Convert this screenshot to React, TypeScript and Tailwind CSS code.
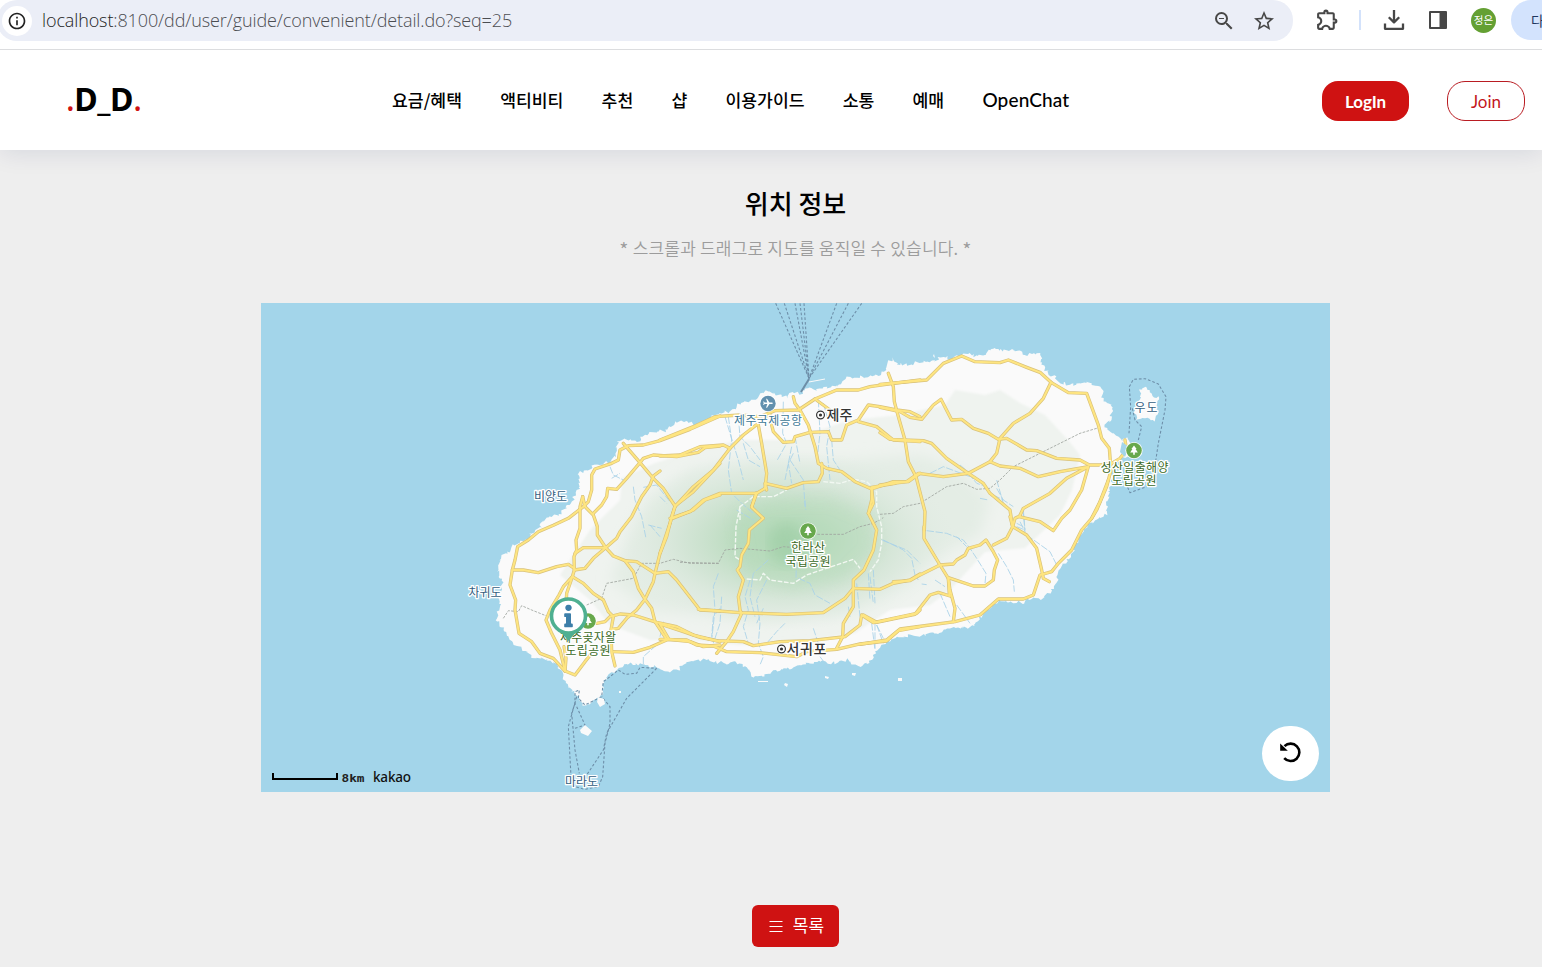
import React from "react";
import { FaInfo } from "react-icons/fa";
import { MdFlight, MdInfoOutline, MdOutlineExtension, MdStarBorder, MdZoomOut } from "react-icons/md";

type Sheet = { x: number; y: number; lines: string[] };

const coast =
  "497,597 502,588 502,580 499,572 498,563 503,556 511,552 513,546 525,540 532,533 540,527 547,517 560,515 567,508 573,500 576,492 580,488 579,473 587,471 593,465 610,462 615,456 618,442 622,440 630,439 637,442 647,435 657,431 665,431 673,425 680,421 687,421 693,425 704,422 712,416 720,414 735,409 740,403 753,400 760,394 768,391 775,394 787,397 793,392 800,394 807,388 815,391 828,387 840,385 847,378 860,377 875,376 883,373 888,363 893,358 898,363 905,365 920,362 930,363 943,356 951,359 963,353 974,356 987,353 990,348 1003,350 1013,349 1027,355 1040,353 1043,367 1053,377 1062,383 1073,385 1080,382 1087,382 1102,388 1103,400 1112,404 1111,420 1103,425 1109,431 1122,440 1128,437 1132,445 1127,455 1117,463 1112,473 1112,480 1108,497 1106,514 1093,522 1083,531 1077,540 1075,550 1066,562 1057,570 1058,584 1042,600 1030,599 1023,603 1000,600 983,613 973,627 957,627 933,634 915,636 903,636 893,638 884,645 875,653 867,663 858,666 847,660 833,663 820,661 803,664 790,668 773,672 766,676 753,677 747,669 740,663 723,663 707,660 693,660 677,670 668,671 657,667 640,665 630,663 617,669 608,675 603,683 602,695 594,702 584,705 577,697 568,685 562,674 556,664 546,659 533,657 520,648 510,640 503,628 495,618 500,607";

const udo = "1140,390 1146,386 1150,393 1155,397 1160,397 1156,403 1158,413 1155,422 1147,418 1137,419 1134,412 1136,404 1141,400";

/* Adds small irregular offsets between the surveyed points of a shoreline. */
function ragged(points: string, size: number): string {
  const pts = points.split(" ").map((p) => p.split(",").map(Number));
  let seed = 17;
  const rnd = () => {
    seed = (seed * 16807) % 2147483647;
    return seed / 2147483647 - 0.5;
  };
  const out: string[] = [];
  pts.forEach((a, i) => {
    const b = pts[(i + 1) % pts.length];
    const n = Math.max(1, Math.round(Math.hypot(b[0] - a[0], b[1] - a[1]) / 2));
    for (let k = 0; k < n; k++) {
      const t = k / n;
      out.push((a[0] + (b[0] - a[0]) * t + rnd() * size).toFixed(1) + "," + (a[1] + (b[1] - a[1]) * t + rnd() * size).toFixed(1));
    }
  });
  return out.join(" ");
}

const coastPoints = ragged(coast, 3.6);
const udoPoints = ragged(udo, 2);

const roads: Sheet[] = [
  {
    x: 460, y: 400,
    lines: [
      "780,48 690,88 600,122 550,135 505,137 480,150 475,180 455,190 405,207 395,225 395,270 385,305 370,320 325,355 280,376 235,395 205,420 173,440 165,480 157,510 150,555 167,600 165,630 177,700 215,725 240,760 280,775 315,813 345,825 375,785 395,760",
      "490,130 540,188 580,235 610,265 645,318 635,350 620,410 600,460 585,520 580,545 555,598 530,630 500,655 475,685 455,688",
      "780,138 735,143 715,157 650,170 580,165 550,175 540,188 500,235 470,268 443,265 440,290 425,315 400,340",
      "600,213 580,228 570,255 545,290 515,350 480,395 470,415 437,443",
      "368,290 375,320 400,345 412,380 412,405 437,443 460,468 495,482 520,515 535,565 555,598 575,625 585,665 620,718",
      "368,290 360,320 360,385 348,420 350,450 342,470 343,510 337,530 310,560 297,585 270,630 258,660 275,700 300,750 315,813",
      "437,443 370,443 345,460", "437,443 400,475 375,505 343,510",
      "157,510 190,510 235,518 290,500 325,493 343,505",
      "337,530 370,550 400,580 430,600 445,635 460,650 453,690 455,755 465,798",
      "337,530 320,580 318,620",
      "495,482 530,485 585,520 625,515 650,540 720,630 780,633",
      "780,190 700,275 645,318", "780,285 735,300 700,330 638,355",
    ],
  },
  {
    x: 460, y: 590,
    lines: [
      "410,100 435,95 450,80 480,72 520,75 590,97 650,110 700,135 780,155",
      "460,185 520,187 570,172 625,148 690,155 730,170 780,165", "312,170 318,205 315,243",
    ],
  },
  {
    x: 660, y: 300,
    lines: [
      "0,420 100,380 165,350 240,345 300,350 345,332 415,330 465,297 530,270 595,270 630,260 700,250 780,240",
      "400,290 405,310 420,330 445,375 465,440 475,490 500,505 545,515 585,545 635,567 700,545 745,545 780,520",
      "0,468 60,465 120,440 190,435 210,445 160,510 100,560 45,620",
      "210,445 250,405 295,370 330,345",
      "295,375 305,430 320,520 315,565 290,580 180,580 130,600 90,635 30,655",
      "335,375 340,395 370,427 400,425 405,410 450,397 505,395 515,420 545,420 560,375 595,360 625,315 660,320 710,330 750,335 780,350",
      "485,490 487,520 475,545 430,548 380,565 315,550 320,570",
      "595,365 650,380 700,420 780,425", "465,297 510,330", "290,580 275,620",
    ],
  },
  {
    x: 660, y: 500,
    lines: [
      "288,-20 275,22 310,55 268,90 265,130 245,165 240,200 232,210 250,240 235,290 240,330 245,340 220,395 200,425 170,460",
      "45,20 30,70 0,160",
      "115,328 240,338 380,343 490,338 555,295 580,265 660,268 700,250 750,240 780,222",
      "635,-33 640,10 625,40 650,90 640,150 612,210 580,240 580,320 550,370 548,410 530,445",
      "0,372 70,395 120,412 170,422 250,425 280,437 360,425 450,422 555,410 600,375 605,345 640,368 700,355 770,340 780,330",
      "0,418 80,420 110,435 160,438 200,455 300,458 410,470 440,455 530,448 600,432 680,423 715,392 780,380",
      "0,372 25,415",
    ],
  },
  {
    x: 880, y: 330,
    lines: [
      "0,163 140,150 190,100 245,78 285,95 360,98 385,90 440,112 480,127 513,157 565,188 620,190 655,285 665,325 688,355 693,420 680,470 650,540 635,565",
      "25,130 40,170 43,215 55,260 75,330 85,395 108,440 135,545 133,600",
      "513,157 490,205 450,250 400,280 360,325 350,370 330,395 265,430 190,440 115,430 80,455 0,465",
      "0,232 60,245 90,262 125,268 160,225 183,208 215,270 245,268 280,295 325,310 355,328 380,325 440,360 470,362 530,385 600,390 628,405 660,405 695,400 720,385 740,360 735,330",
      "0,308 30,328 130,332 155,340 200,385 265,430 310,460 330,490 390,540 398,590",
      "330,395 360,408 420,415 475,440 540,425 625,410 560,445 510,490 430,535 418,560 480,575 520,602 545,565 570,540 605,480 625,410",
    ],
  },
  {
    x: 860, y: 480,
    lines: [
      "745,0 720,65 695,115 665,150 635,210 595,250 575,275 540,285 520,345 490,357 415,357 360,405 285,425 120,447 80,480 0,493",
      "192,140 192,175 240,255 265,295 270,330 285,385 280,425", "265,295 268,345",
      "100,305 150,302 180,285 240,255 280,252 290,240 315,225 325,205 360,195 378,180 400,215 413,240 403,270 400,300 375,318 340,318 265,293",
      "450,110 458,140 500,165 530,205 545,270 550,295 568,305", "458,140 440,175 400,195",
      "458,140 465,115 480,108", "270,348 235,337 210,345 165,403 50,427 10,405",
      "105,10 35,22 35,60 25,100",
    ],
  },
];

const rivers: Sheet[] = [
  { x: 460, y: 400, lines: ["450,200 460,225 490,240", "520,260 525,300 545,350 558,415", "550,262 590,255 630,305", "565,375 605,385", "570,375 600,410", "455,235 480,220"] },
  { x: 460, y: 590, lines: ["780,55 760,80 755,140", "590,165 550,200 550,225", "610,95 600,140"] },
  {
    x: 660, y: 300,
    lines: [
      "195,350 210,400 235,480 250,540", "205,350 215,420 205,510 215,580 245,610 280,640", "235,350 240,410 270,440 300,480", "370,305 368,400 380,430 352,480", "395,440 375,540",
      "400,460 385,490 395,550", "390,480 430,540 435,620", "475,300 480,400 472,470", "490,310 510,380 500,440 510,540", "515,420 520,480 540,510", "405,410 420,490", "0,590 20,610", "250,430 265,480 300,500",
    ],
  },
  {
    x: 660, y: 500,
    lines: [
      "175,220 160,260 165,330 155,420", "185,290 180,370 160,430", "270,240 255,290 265,330 250,380 265,430", "325,180 280,220 270,290 285,350", "320,240 290,300 300,370 295,430 310,470 300,495",
      "410,130 408,240", "415,235 450,250 465,285 510,310", "375,370 350,395 320,430", "230,30 280,60", "435,0 437,30", "460,385 475,430", "640,210 645,310", "625,220 630,300", "665,120 740,150 780,190",
      "645,370 645,450", "650,375 670,430", "480,470 510,510", "310,325 290,370", "565,320 570,350", "590,250 600,350",
    ],
  },
  { x: 880, y: 330, lines: ["150,430 190,410 270,440", "265,430 290,460 320,470", "350,450 370,520", "340,495 370,510 400,530", "430,540 435,600", "410,580 430,590", "240,405 270,430"] },
  {
    x: 860, y: 480,
    lines: [
      "200,152 260,160 310,180 330,205 350,235 378,280 375,310", "290,170 320,200", "70,180 130,210 155,235 165,285 175,300", "415,220 440,260 460,300 463,335", "500,165 570,215 590,255",
      "410,25 430,60", "480,125 495,155 490,100", "470,140 495,150", "360,55 385,60", "225,300 255,320", "240,340 270,410", "290,375 330,430", "30,290 40,370", "35,430 45,510", "50,435 70,475", "185,312 200,314",
    ],
  },
];

const boundaries: Sheet[] = [
  { x: 460, y: 400, lines: ["130,655 145,632 175,635 185,617 215,630 265,650", "380,615 425,595 440,550 520,535 545,490 600,490 640,478 690,490 780,490"] },
  { x: 660, y: 500, lines: ["60,187 175,190 195,150 240,145 330,153 370,140 430,145", "460,103 550,103 600,80 640,70 670,53"] },
  { x: 880, y: 330, lines: ["0,553 40,550 70,530 120,520 200,470 250,460 290,478 330,475 360,450 400,410 500,360 600,310 660,292"] },
];

const parkLines: Sheet[] = [
  { x: 660, y: 500, lines: ["240,60 240,20 280,-10 340,-10 380,-30", "490,-55 540,-50 580,-62 620,-55 650,-25 650,20 665,80 665,130 655,180 630,215", "240,20 228,80 225,170 240,180", "260,237 300,240 310,220 330,240 400,250 440,225 580,178 600,205"] },
];

const ferries: Sheet[] = [
  {
    x: 460, y: 590,
    lines: [
      "350,320 325,410 333,560 345,590 375,598 415,590 428,560 435,460 450,400 450,350 425,320", "345,340 335,370 345,480 358,550", "350,350 375,405 345,415", "590,235 500,325 440,430 430,480 380,555",
      "345,345 345,305 358,300 355,325 375,345 425,320 430,275 450,260 475,240 495,253 530,250 540,232 590,235",
    ],
  },
  { x: 660, y: 300, lines: ["347,10 447,235", "373,10 447,235", "405,10 447,235", "420,10 447,235", "432,10 447,235", "530,10 447,235", "565,10 447,235", "605,10 447,235"] },
  { x: 880, y: 330, lines: ["747,310 752,230 748,170 760,148 795,146 835,162 858,200 855,240 835,340 820,440 800,470 750,488 742,470", "757,235 765,270 785,290 775,330"] },
];

const Lines = ({ data, stroke, width, dash }: { data: Sheet[]; stroke: string; width: number; dash?: string }) => (
  <g fill="none" stroke={stroke} strokeWidth={width} strokeDasharray={dash} strokeLinecap={dash ? "butt" : "round"} strokeLinejoin="round">
    {data.map((s, i) => (
      <g key={i} transform={`translate(${s.x} ${s.y}) scale(.33333)`}>
        {s.lines.map((l, k) => (
          <polyline key={k} points={l} />
        ))}
      </g>
    ))}
  </g>
);

const Label = ({ x, y, w, color = "#35607f", size = 12, weight = 400, children }: { x: number; y: number; w: number; color?: string; size?: number; weight?: number; children: string }) => (
  <text x={x} y={y} textAnchor="middle" textLength={w} fontSize={size} fontWeight={weight} fill={color} stroke="#fff" strokeWidth="2.6" strokeLinejoin="round" paintOrder="stroke">
    {children}
  </text>
);

const Tree = ({ x, y }: { x: number; y: number }) => (
  <g transform={`translate(${x} ${y})`}>
    <circle r="8.6" fill="#fff" />
    <circle r="7.8" fill="#67a84c" />
    <path d="M0-5 2.6-1.4H1.6L3.8 2H.8V4.2H-.8V2H-3.8L-1.6-1.4H-2.6Z" fill="#fff" />
  </g>
);

const Town = ({ x, y }: { x: number; y: number }) => (
  <g transform={`translate(${x} ${y})`}>
    <circle r="5.2" fill="#fff" />
    <circle r="3.9" fill="#fff" stroke="#333" strokeWidth="1.2" />
    <circle r="1.6" fill="#333" />
  </g>
);

function IslandMap() {
  return (
    <svg className="block h-full w-full font-['Noto_Sans_CJK_KR',sans-serif]" viewBox="261 303 1069 489">
      <defs>
        <clipPath id="land"><polygon points={coastPoints} /></clipPath>
        <radialGradient id="peak">
          <stop offset="0" stopColor="#aad5b0" />
          <stop offset=".3" stopColor="#bcdcc0" />
          <stop offset=".6" stopColor="#cfe3d2" stopOpacity=".8" />
          <stop offset="1" stopColor="#e0ebe2" stopOpacity="0" />
        </radialGradient>
        <filter id="soft" x="-10%" y="-10%" width="120%" height="120%"><feGaussianBlur stdDeviation="1.2" /></filter>
        <filter id="softer" x="-10%" y="-10%" width="120%" height="120%"><feGaussianBlur stdDeviation="7" /></filter>
      </defs>
      <rect x="261" y="303" width="1069" height="489" fill="#a3d5ea" />
      <polygon points={coastPoints} fill="#fafafa" />
      <polygon points={udoPoints} fill="#fafafa" />
      <g clipPath="url(#land)">
        <path filter="url(#soft)" fill="#eff3ef" d="M560 575 580 545 590 530 620 500 622 478 655 463 700 449 740 440 790 440 850 420 900 415 945 405 955 390 985 395 1000 390 1020 403 1045 415 1068 440 1080 455 1072 490 1060 515 1025 548 985 552 950 590 930 605 890 610 855 633 800 642 740 645 690 640 650 640 610 625 590 600Z" />
        <path filter="url(#softer)" fill="#e4ede5" d="M610 580 625 545 650 500 690 470 760 460 850 460 920 455 960 470 990 500 980 535 930 560 890 590 840 615 760 622 700 615 650 610Z" />
        <ellipse cx="785" cy="540" rx="170" ry="90" fill="url(#peak)" />
        <path filter="url(#softer)" fill="#b8dbbc" opacity=".45" d="M735 515 770 500 830 498 870 515 875 550 845 580 790 590 745 572Z" />
        <ellipse filter="url(#softer)" cx="787" cy="544" rx="18" ry="22" fill="#98cba0" opacity=".5" />
      </g>
      <Lines data={rivers} stroke="#a9d2e8" width={2.6} dash="22 5" />
      <Lines data={boundaries} stroke="#a0a6a0" width={2.6} dash="8 4" />
      <Lines data={parkLines} stroke="#f2f8f2" width={4.2} dash="14 5" />
      <Lines data={ferries} stroke="#6d8ea8" width={3.2} dash="8 6" />
      <path d="M809 379 801 392" stroke="#6d8ea6" strokeWidth="2" />
      <path d="M809 382 825 379M801 397 812 392" stroke="#fafafa" strokeWidth="1" />
      <Lines data={roads} stroke="#d9c27a" width={10} />
      <Lines data={roads} stroke="#fee581" width={6} />
      <g fill="#fafafa">
        <path d="M598 697 604 699 605 704 600 707 597 702ZM580 730 585 725 592 731 588 736 581 733ZM619 691H621V693H619ZM785 683 788 684 787 687 784 685ZM825 676 829 677 828 679 825 678ZM852 673 856 673 855 676 852 675ZM898 678 902 678 902 681 898 681ZM758 681 768 681 768 682 758 682ZM934 354 935 358 933 356Z" />
        <path d="M1122 442 1129 447 1125 457 1120 452Z" fill="#a3d5ea" />
      </g>

      <circle cx="768" cy="403.500" r="8.500" fill="#fff" />
      <circle cx="768" cy="403.500" r="7.700" fill="#6290ae" />
      <g transform="translate(768 403.500) rotate(90) translate(-5.750 -5.750)"><MdFlight size={11.5} color="#fff" /></g>
      <Label x={768} y={424.500} w={68} color="#3e7896">제주국제공항</Label>
      <Town x={820.500} y={415} />
      <Label x={839.500} y={419.500} w={26} color="#333" size={14} weight={500}>제주</Label>
      <Label x={1146} y={412} w={23}>우도</Label>
      <Label x={550.500} y={501} w={33}>비양도</Label>
      <Label x={485} y={597} w={33}>차귀도</Label>
      <Label x={581.500} y={786} w={33}>마라도</Label>
      <Tree x={1134} y={450.500} />
      <Label x={1134.500} y={471.500} w={68} color="#3a6a25">성산일출해양</Label>
      <Label x={1134} y={485} w={45} color="#3a6a25">도립공원</Label>
      <Tree x={808} y={531} />
      <Label x={808} y={552} w={34} color="#3a6a25">한라산</Label>
      <Label x={808} y={565.500} w={45} color="#3a6a25">국립공원</Label>
      <Tree x={588} y={621} />
      <Label x={588} y={641.500} w={56} color="#3a6a25">제주곶자왈</Label>
      <Label x={588} y={655} w={45} color="#3a6a25">도립공원</Label>
      <Town x={781.500} y={649} />
      <Label x={806.500} y={653.500} w={40} color="#333" size={14} weight={500}>서귀포</Label>

      <path d="M560 631H577L568.500 641Z" fill="#4fae92" />
      <circle cx="568.500" cy="616" r="17" fill="#fff" stroke="#4fb091" strokeWidth="3.600" />
      <g transform="translate(557 604.500)"><FaInfo size={23} color="#3d7fa9" /></g>

      <path d="M273 773V779H337V773" fill="none" stroke="#000" strokeWidth="2" />
      <text x="341.500" y="782" textLength="23" lengthAdjust="spacingAndGlyphs" fontFamily="DejaVu Sans Mono, monospace" fontSize="10.500" fontWeight="700" fill="#222">8km</text>
      <text x="373" y="782" textLength="38" fontFamily="Noto Sans, sans-serif" fontSize="13.500" fontWeight="500" fill="#111">kakao</text>
    </svg>
  );
}

function BrowserBar() {
  return (
    <div className="relative z-10 flex h-[50px] shrink-0 items-start overflow-hidden border-b border-[#dcdddf] bg-white text-[#474747]">
      <div className="-ml-[3px] flex h-[41px] w-[1296px] shrink-0 items-center rounded-[20px] bg-[#ebeef7]">
        <span className="ml-[5px] flex size-[30px] items-center justify-center rounded-full bg-white text-[#222]">
          <MdInfoOutline size={20} />
        </span>
        <span className="-mt-[2px] ml-[10px] w-[470px] whitespace-nowrap font-['Open_Sans',sans-serif] text-[18px] leading-[24px] font-[350] tracking-[-0.12px] text-[#4b4d52]">
          <span className="text-[#222]">localhost</span>:8100/dd/user/guide/convenient/detail.do?seq=25
        </span>
        <MdZoomOut className="ml-[700px] shrink-0" size={24} />
        <MdStarBorder className="ml-4 shrink-0" size={24} />
      </div>
      <div className="flex h-10 items-center">
        <MdOutlineExtension className="-mt-[2px] ml-[22px]" size={25} />
        <span className="ml-[19px] h-5 w-[2px] bg-[#d3e2fb]" />
        <svg className="ml-[21px]" width="24" height="24" viewBox="0 0 24 24" fill="none" stroke="currentColor" strokeWidth="2.300">
          <path d="M12 2V14M6.800 9.200 12 14.400 17.200 9.200M3 15.500V20.800H21V15.500" strokeLinejoin="round" />
        </svg>
        <svg className="ml-[20px]" width="24" height="24" viewBox="0 0 24 24">
          <path d="M4 4H20V20H4Z" fill="none" stroke="currentColor" strokeWidth="2" strokeLinejoin="round" />
          <path d="M13.500 4H20V20H13.500Z" fill="currentColor" />
        </svg>
        <span className="ml-[21px] flex size-[25px] items-center justify-center rounded-full bg-[#64a033] font-['Noto_Sans_CJK_KR',sans-serif] text-[10.5px] text-white">정은</span>
        <span className="ml-[15px] flex h-10 w-[90px] items-center rounded-[20px] bg-[#d3e3fd] pl-5 font-['Noto_Sans_CJK_KR',sans-serif] text-[14px] text-[#1f3760]">다</span>
      </div>
    </div>
  );
}

const menu = ["요금/혜택", "액티비티", "추천", "샵", "이용가이드", "소통", "예매"];

export default function App() {
  return (
    <div className="flex h-[967px] w-[1542px] flex-col overflow-hidden bg-[#eeeeee] font-['Noto_Sans_CJK_KR',sans-serif] text-black">
      <BrowserBar />
      <header className="flex h-[100px] shrink-0 items-center bg-white shadow-[0_2px_24px_rgba(1,30,90,0.11)]">
        <div className="-mt-[2px] ml-[66px] w-[326px] font-['Noto_Sans',sans-serif] text-[32px] leading-none font-bold tracking-[-0.4px]">
          <span className="font-medium text-[#cf1212]">.</span>D_D<span className="font-medium text-[#cf1212]">.</span>
        </div>
        <nav className="flex w-[930px] items-center gap-[38.2px] text-[17.2px] font-medium whitespace-nowrap">
          {menu.map((m) => (
            <a key={m}>{m}</a>
          ))}
          <a className="mt-[1px] font-['Lato','Noto_Sans_CJK_KR',sans-serif] text-[19px] tracking-[0.15px]">OpenChat</a>
        </nav>
        <button className="mt-[2px] h-10 w-[87px] rounded-[16px] bg-[#cf1212] pt-[2px] font-['Lato',sans-serif] text-[17px] font-bold tracking-[-0.1px] text-white">LogIn</button>
        <button className="mt-[2px] ml-[38px] h-10 w-[78px] rounded-[18px] border border-[#b91c22] pt-[1px] font-['Lato',sans-serif] text-[17px] text-[#c4161c]">Join</button>
      </header>
      <main className="flex w-[1591px] flex-col items-center">
        <h1 className="mt-[35px] text-[26px] leading-[36px] font-medium">위치 정보</h1>
        <p className="mt-[15px] text-[17px] leading-[24px] font-[350] tracking-[0.2px] text-[#9c9c9c]">
          <span className="relative top-[3px] text-[20px] leading-none">*</span> 스크롤과 드래그로 지도를 움직일 수 있습니다. <span className="relative top-[3px] text-[20px] leading-none">*</span>
        </p>
        <div className="relative mt-[43px] h-[489px] w-[1069px]">
          <IslandMap />
          <button className="absolute right-[11px] bottom-[11px] flex h-[55px] w-[57px] items-center justify-center rounded-full bg-white">
            <svg width="24" height="24" viewBox="0 0 24 24" className="-mt-[4px] -ml-[1px]">
              <path d="M6.500 6.200A8.700 8.700 0 1 1 6.200 18.200" fill="none" stroke="#000" strokeWidth="2.600" />
              <path d="M2.200 3.500V10.800H9.800Z" fill="#000" />
            </svg>
          </button>
        </div>
        <button className="mt-[113px] flex h-[42px] w-[87px] items-center justify-center gap-[10px] rounded-[6px] bg-[#cf1212] pl-[2px] text-[17px] text-white">
          <svg width="14" height="12" viewBox="0 0 14 12"><path d="M.5 1.500H13.500M.5 6.500H13.500M.5 11.500H13.500" stroke="#fff" strokeWidth="1" /></svg>
          <span className="-mt-[2px]">목록</span>
        </button>
      </main>
    </div>
  );
}
